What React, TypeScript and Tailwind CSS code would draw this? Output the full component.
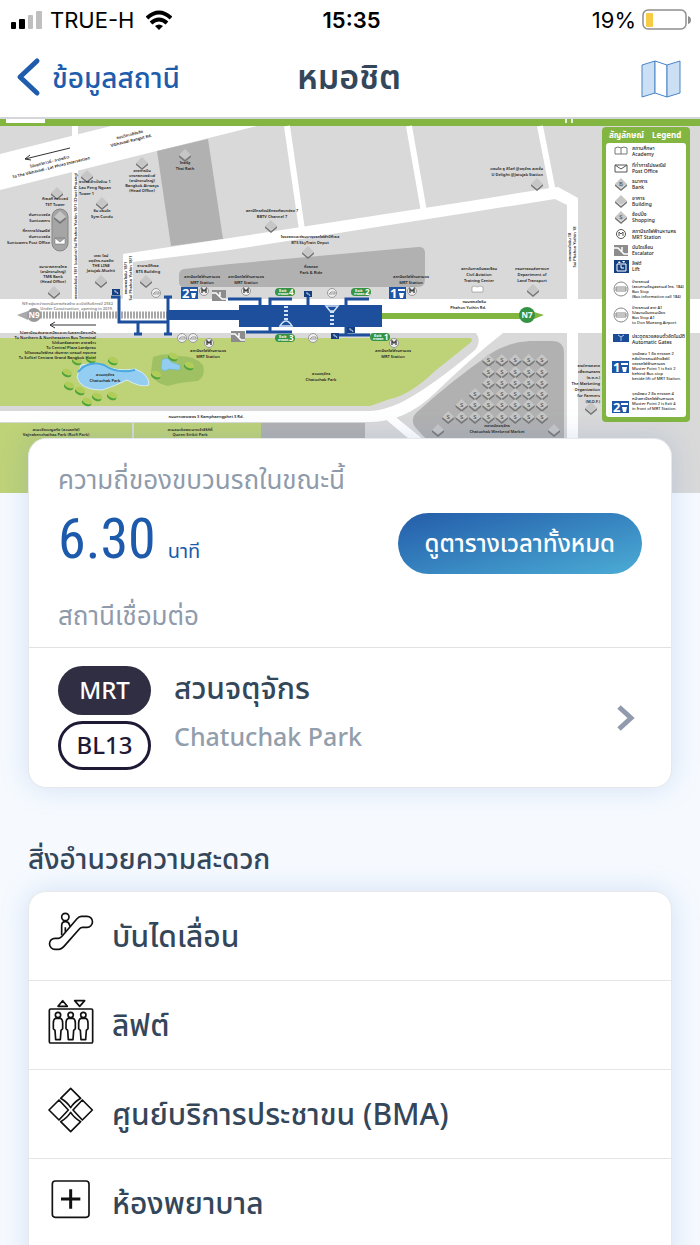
import { ReactNode } from 'react';

type Anchor = 'start' | 'middle' | 'end';

interface MapLabel {
  x: number;
  y: number;
  lines: string[];
  anchor?: Anchor;
  rotate?: number;
  gap?: number;
  tone?: string;
}

interface Facility {
  id: string;
  name: string;
  icon: ReactNode;
}

const mapLabels: MapLabel[] = [
  { x: 50, y: 163, lines: ['ไปแยกวิภาวดี - ลาดพร้าว', 'To The Vibhavadi - Lat Phrao Intersection'], rotate: -14 },
  { x: 130, y: 136, lines: ['ถนนวิภาวดีรังสิต', 'Vibhavadi Rangsit Rd.'], rotate: -14 },
  { x: 55, y: 200, lines: ['ทีเอสที ทาวเวอร์', 'TST Tower'] },
  { x: 50, y: 216, lines: ['ซันทาวเวอร์ส', 'Suntowers'], anchor: 'end' },
  { x: 50, y: 232, lines: ['ที่ทำการไปรษณีย์', 'ซันทาวเวอร์ส', 'Suntowers Post Office'], anchor: 'end' },
  { x: 79, y: 183, lines: ['อาคารเล้าเป้งง้วน 1', 'Lao Peng Nguan', 'Tower 1'], anchor: 'start' },
  { x: 102, y: 212, lines: ['ซิม คอนโด', 'Sym Condo'] },
  { x: 142, y: 172, lines: ['สายการบิน', 'บางกอกแอร์เวย์', '(สำนักงานใหญ่)', 'Bangkok Airways', '(Head Office)'], gap: 5 },
  { x: 185, y: 164, lines: ['ไทยรัฐ', 'Thai Rath'] },
  { x: 53, y: 268, lines: ['ธนาคารทหารไทย', '(สำนักงานใหญ่)', 'TMB Bank', '(Head Office)'], gap: 5 },
  { x: 101, y: 257, lines: ['เดอะ ไลน์', 'จตุจักร-หมอชิต', 'THE LINE', 'Jatujak-Mochit'], gap: 5 },
  { x: 148, y: 267, lines: ['อาคารบีทีเอส', 'BTS Building'] },
  { x: 202, y: 278, lines: ['สถานีรถไฟฟ้ามหานคร', 'MRT Station'] },
  { x: 246, y: 278, lines: ['สถานีรถไฟฟ้ามหานคร', 'MRT Station'] },
  { x: 272, y: 212, lines: ['สถานีโทรทัศน์สีกองทัพบกช่อง 7', 'BBTV Channel 7'] },
  { x: 310, y: 238, lines: ['โรงจอดและซ่อมบำรุงรถไฟฟ้าบีทีเอส', 'BTS SkyTrain Depot'] },
  { x: 311, y: 268, lines: ['ที่จอดรถ', 'Park & Ride'] },
  { x: 411, y: 278, lines: ['สถานีรถไฟฟ้ามหานคร', 'MRT Station'] },
  { x: 479, y: 270, lines: ['สถาบันการบินพลเรือน', 'Civil Aviation', 'Training Center'] },
  { x: 532, y: 270, lines: ['กรมการขนส่งทางบก', 'Department of', 'Land Transport'] },
  { x: 543, y: 170, lines: ['คอนโด ยู ดีไลท์ @จตุจักร สเตชั่น', 'U Delight @Jatujak Station'], anchor: 'end' },
  { x: 486, y: 303, lines: ['ถนนพหลโยธิน', 'Phahon Yothin Rd.'], anchor: 'end' },
  { x: 113, y: 305, lines: ['N9 อยู่ระหว่างดำเนินการก่อสร้าง จะเปิดให้บริการปี 2562', 'Under Construction, opening in 2019.'], anchor: 'end', tone: '#858585', gap: 5 },
  {
    x: 96,
    y: 334,
    lines: [
      'ไปสถานีขนส่งสายเหนือและตะวันออกเฉียงเหนือ',
      'To Northern & Northeastern Bus Terminal',
      'ไปเซ็นทรัลพลาซา ลาดพร้าว',
      'To Central Plaza Lardprao',
      'ไปโรงแรมโซฟิเทล เซ็นทารา แกรนด์ กรุงเทพ',
      'To Sofitel Centara Grand Bangkok Hotel',
    ],
    anchor: 'end',
    gap: 5,
  },
  { x: 105, y: 376, lines: ['สวนจตุจักร', 'Chatuchak Park'] },
  { x: 208, y: 352, lines: ['สถานีรถไฟฟ้ามหานคร', 'MRT Station'] },
  { x: 321, y: 375, lines: ['สวนจตุจักร', 'Chatuchak Park'] },
  { x: 393, y: 352, lines: ['สถานีรถไฟฟ้ามหานคร', 'MRT Station'] },
  { x: 206, y: 418, lines: ['ถนนกำแพงเพชร 3 Kamphaengphet 3 Rd.'] },
  { x: 56, y: 431, lines: ['สวนวชิรเบญจทัศ (สวนรถไฟ)', 'Vajirabenchathas Park (Rotfi Park)'], gap: 5 },
  { x: 190, y: 431, lines: ['สวนสมเด็จพระนางเจ้าสิริกิติ์', 'Queen Sirikit Park'], gap: 5 },
  { x: 497, y: 427, lines: ['ตลาดนัดจตุจักร', 'Chatuchak Weekend Market'] },
  {
    x: 600,
    y: 367,
    lines: ['องค์การตลาด', 'เพื่อเกษตรกร', '(อ.ต.ก.)', 'The Marketing', 'Organization', 'for Farmers', '(M.O.F.)'],
    anchor: 'end',
  },
  { x: 77, y: 236, lines: ['ซอยพหลโยธิน 18/1 (เฉยพ่วง) Soi Phahon Yothin 18/1 (Choei Phuang)'], rotate: -90 },
  { x: 127, y: 278, lines: ['ซอยพหลโยธิน 18/1', 'Soi Phahon Yothin 18/1'], rotate: -90, gap: 5 },
  { x: 571, y: 247, lines: ['ซอยพหลโยธิน 18', 'Soi Phahon Yothin 18'], rotate: -90, gap: 5 },
];

const buildings: [number, number][] = [
  [57, 193], [60, 217], [87, 176], [102, 203], [142, 163], [185, 155], [54, 292], [101, 281], [146, 281],
  [271, 226], [308, 252], [537, 184], [533, 290], [591, 408], [554, 430], [438, 430],
];

const trees: [number, number][] = [
  [113, 361], [77, 361], [91, 359], [67, 373], [69, 386], [80, 391],
  [97, 397], [112, 396], [87, 402], [156, 375], [189, 366], [173, 357],
];

// market stalls, listed per row as [y, first x]
const stallRows: [number, number][] = [
  [360, 488], [372, 488], [383, 488], [394, 475], [405, 461], [417, 448],
];

const legend = [
  { y: 150, icon: 'book', lines: ['สถานศึกษา', 'Academy'] },
  { y: 167, icon: 'mail', lines: ['ที่ทำการไปรษณีย์', 'Post Office'] },
  { y: 183, icon: 'B', lines: ['ธนาคาร', 'Bank'] },
  { y: 200, icon: 'building', lines: ['อาคาร', 'Building'] },
  { y: 216, icon: 'S', lines: ['ช้อปปิ้ง', 'Shopping'] },
  { y: 233, icon: 'mrt', lines: ['สถานีรถไฟฟ้ามหานคร', 'MRT Station'] },
  { y: 249, icon: 'escalator', lines: ['บันไดเลื่อน', 'Escalator'] },
  { y: 265, icon: 'lift', lines: ['ลิฟต์', 'Lift'] },
  { y: 283, icon: 'bus', lines: ['ป้ายรถเมล์', '(สอบถามข้อมูลรถเมล์ โทร. 184)', 'Bus Stop', '(Bus information call 184)'] },
  { y: 309, icon: 'bus', lines: ['ป้ายรถเมล์ สาย A1', 'ไปสนามบินดอนเมือง', 'Bus Stop A1', 'to Don Mueang Airport'] },
  { y: 338, icon: 'gate', lines: ['ประตูตรวจสอบตั๋วอัตโนมัติ', 'Automatic Gates'] },
  { y: 355, icon: '1', lines: ['จุดนัดพบ 1 คือ ทางออก 2', 'หลังป้ายรถเมล์ข้างลิฟต์', 'ของรถไฟฟ้ามหานคร', 'Muster Point 1 is Exit 2', 'behind Bus stop', 'beside lift of MRT Station.'] },
  { y: 395, icon: '2', lines: ['จุดนัดพบ 2 คือ ทางออก 4', 'หน้าสถานีรถไฟฟ้ามหานคร', 'Muster Point 2 is Exit 4', 'in front of MRT Station.'] },
];

function Tile({ x, y, mark }: { x: number; y: number; mark?: string }) {
  return (
    <g transform={`translate(${x} ${y})`}>
      <path d="M-6 1 0 6 6 1V3L0 8-6 3Z" fill="#777" />
      <path d="M0-5 6 1 0 5-6 1Z" fill="#c6c6c6" />
      {mark && (
        <text y="3" fontSize="6" textAnchor="middle" fill="#444">
          {mark}
        </text>
      )}
    </g>
  );
}

function RoundSign({ x, y, kind }: { x: number; y: number; kind: 'M' | 'bus' }) {
  return (
    <g transform={`translate(${x} ${y})`} fill="none">
      <circle r="4.5" fill="#eee" stroke="#999" />
      {kind === 'M' ? (
        <path d="M-2 2V-2L0 0 2-2V2" stroke="#444" strokeWidth="1.4" />
      ) : (
        <path d="M-3 1H3V-1H-1L-3 1Z" stroke="#999" />
      )}
    </g>
  );
}

function MusterPoint({ x, y, num }: { x: number; y: number; num: string }) {
  return (
    <g transform={`translate(${x} ${y})`} fill="#fff">
      <rect width="17" height="12" fill="#1d56a5" />
      <text x="1" y="11" fontSize="13" fontWeight="700">
        {num}
      </text>
      <path d="M9 2H16V4H9ZM10 6H15L14 11H11Z" />
    </g>
  );
}

function EscalatorSign({ x, y }: { x: number; y: number }) {
  return (
    <g transform={`translate(${x} ${y})`}>
      <rect width="14" height="11" fill="#8c8c8c" />
      <path d="M0 3H4L10 9H14M8 2V6" fill="none" stroke="#fff" strokeWidth="1.5" />
    </g>
  );
}

function LiftSign({ x, y }: { x: number; y: number }) {
  return (
    <g transform={`translate(${x} ${y})`}>
      <rect width="8" height="6" fill="#163f80" />
      <path d="M3 1V3H5L6 5" fill="none" stroke="#b9cbe6" />
    </g>
  );
}

function ExitSign({ x, y, num }: { x: number; y: number; num: string }) {
  return (
    <g transform={`translate(${x} ${y})`} fill="#fff" fontWeight="700">
      <rect width="20" height="8" rx="4" fill="#359344" />
      <text x="4" y="4" fontSize="4">Exit</text>
      <text x="3" y="7" fontSize="3">ทางออก</text>
      <text x="14" y="7" fontSize="8">{num}</text>
    </g>
  );
}

function LegendIcon({ icon, y }: { icon: string; y: number }) {
  switch (icon) {
    case 'book':
      return (
        <g fill="#fff" stroke="#777">
          <path d={`M615 ${y - 2}Q618 ${y - 4} 621 ${y - 2}Q624 ${y - 4} 627 ${y - 2}V${y + 4}H615Z`} />
          <path d={`M621 ${y - 2}V${y + 4}`} />
        </g>
      );
    case 'mail':
      return <path d={`M615 ${y - 2}H627V${y + 5}H615ZL621 ${y + 2} 627 ${y - 2}`} fill="#fff" stroke="#555" />;
    case 'mrt':
      return (
        <g fill="none" stroke="#555">
          <circle cx="621" cy={y + 1} r="4.5" />
          <path d={`M619 ${y + 3}V${y - 1}L621 ${y + 1} 623 ${y - 1}V${y + 3}`} />
        </g>
      );
    case 'escalator':
      return <EscalatorSign x={614} y={y - 4} />;
    case 'lift':
      return (
        <g>
          <rect x="614" y={y - 5} width="15" height="13" fill="#163f80" />
          <path d={`M617 ${y - 1}V${y + 6}H626V${y - 1}ZM621 ${y}V${y + 3}H624`} fill="none" stroke="#fff" />
          <path d={`M618 ${y - 2}L619 ${y - 4} 621 ${y - 2}ZM622 ${y - 4}H625L624 ${y - 2}Z`} fill="#fff" />
        </g>
      );
    case 'bus':
      return (
        <g fill="none" stroke="#888">
          <circle cx="621" cy={y + 6} r="7" />
          <path d={`M616 ${y + 8}V${y + 4}H626V${y + 8}ZM616 ${y + 6}H626`} />
        </g>
      );
    case 'gate':
      return (
        <g>
          <rect x="613" y={y - 4} width="16" height="8" fill="#1b4c97" />
          <path d={`M618 ${y - 3}L621 ${y - 1} 624 ${y - 3}M621 ${y - 1}V${y + 3}`} fill="none" stroke="#aecbea" />
        </g>
      );
    case '1':
    case '2':
      return <MusterPoint x={612} y={y + 6} num={icon} />;
    default:
      return <Tile x={621} y={y} mark={icon === 'building' ? undefined : icon} />;
  }
}

function StationMap() {
  return (
    <svg
      viewBox="0 119 700 374"
      className="block w-full bg-[#d9d9d9]"
      role="img"
      aria-label="แผนที่สถานีหมอชิต"
      fontFamily="'Noto Sans', 'Noto Sans Thai', sans-serif"
    >
      <rect y="119" width="700" height="7" fill="#83b541" />
      <rect x="6" y="119" width="39" height="4" fill="#fff" />
      <path d="M565 119v4h2v-4zM571 119v4h2v-4z" fill="#e6f0d8" />

      {/* roads and blocks north of the line */}
      <path d="M0 154 111 126H257L0 190Z" fill="#fff" />
      <path d="M157 151 208 139 223 239 171 246Z" fill="#b1b1b1" />
      <path d="M75 126V300" stroke="#fff" strokeWidth="6" />
      <path d="M287 126 302 230M409 126 424 212M540 126 553 192" stroke="#fff" strokeWidth="6" />
      <path d="M123 254 230 238 470 201 550 188 558 187 578 198V300H567V205L555 199 460 214 230 250 133 262V300H123Z" fill="#fff" />
      <path d="M179 275Q179 270 184 269L230 264 418 247Q425 246 425 253V279Q425 287 418 287H184Q179 287 179 282Z" fill="#b1b1b1" />
      <rect x="52" y="209" width="16" height="42" rx="8" fill="#a5a5a5" stroke="#858585" />
      <path d="M55 238H65V244H55ZL60 242 65 238" fill="#fff" stroke="#666" strokeWidth=".5" />

      {/* parks, market and roads south of the line */}
      <rect y="299" width="700" height="34" fill="#fff" />
      <path d="M0 338H470Q474 339 470 343L435 371Q410 395 390 399L370 406H0Z" fill="#bed278" />
      <path d="M0 411H370Q385 410 400 403 430 388 475 350 482 341 476 333H503Q470 359 435 393 405 422 370 422H0Z" fill="#fff" />
      <path d="M383 417 392 414 424 440 430 493H412L409 439Z" fill="#fff" />
      <path d="M0 423H132V493H0ZM134 423H261V493H134Z" fill="#bed278" />
      <rect x="261" y="423" width="104" height="70" fill="#b1b1b1" />
      <path d="M564 493V353Q564 341 552 341H530Q508 342 490 354 450 382 416 413 410 419 415 427L428 441V493Z" fill="#b1b1b1" />
      <rect x="567" y="333" width="11" height="160" fill="#fff" />

      <path d="M153 357Q166 352 178 356 196 356 203 365 206 376 198 381 180 382 168 386 152 382 151 372Z" fill="#9fc163" />
      {trees.map(([x, y]) => (
        <g key={`${x}-${y}`} transform={`translate(${x} ${y}) rotate(22)`}>
          <ellipse cy="1" rx="5" ry="3" fill="#4fa33c" />
          <ellipse cy="-1" rx="5" ry="3" fill="#b0cd5a" />
        </g>
      ))}
      <path d="M81 365Q92 362 104 365 116 372 135 369 149 374 149 385 141 388 127 380 115 386 102 390 80 390 77 377Z" fill="#93cdf1" stroke="#d9ecf5" />
      <path d="M78 372Q88 360 104 365 117 374 135 370" fill="none" stroke="#4aa9dd" strokeWidth="2" />
      <path d="M162 360Q168 356 171 362L180 365V370L169 369Q163 373 161 368Z" fill="#93cdf1" stroke="#5fb4e3" strokeWidth=".5" />

      {/* skytrain line */}
      <path d="M40 315H168" stroke="#a8a8a8" strokeWidth="7" strokeDasharray="2 1" />
      <path d="M17 315 28 311V320Z" fill="#aaa" />
      <circle cx="34" cy="315" r="7" fill="#999" />
      <text x="34" y="318" fontSize="8" fontWeight="700" textAnchor="middle" fill="#fff">N9</text>
      <path d="M96 325H50M55 322 50 325 55 328M70 148 25 159M30 155 25 159 31 160" fill="none" stroke="#333" />
      <path d="M382 313H534V312L544 315 534 319H382Z" fill="#83b541" />
      <circle cx="527" cy="315" r="8" fill="#359344" />
      <text x="527" y="318" fontSize="8" fontWeight="700" textAnchor="middle" fill="#fff">N7</text>
      <path d="M167 310H239V305H382V327H239V320H167Z" fill="#1d4f9c" />
      <path
        d="M111 297H119V322H167M138 322V334M134 334H142M168 297V334M164 297H172M164 334H172M228 299H260V307M270 307V299H292M308 296V306M346 306V299H369M270 326V332M246 332H292M346 326V335M335 335H370"
        fill="none"
        stroke="#1d4f9c"
        strokeWidth="3"
      />
      <path d="M286 306V322M332 311V326" stroke="#cfe1f5" strokeWidth="4" strokeDasharray="2 2" />
      <path d="M280 326Q286 316 292 326ZM326 306H338L334 311H330Z" fill="none" stroke="#cfe1f5" strokeWidth="1.5" />

      <MusterPoint x={181} y={287} num="2" />
      <MusterPoint x={389} y={287} num="1" />
      <EscalatorSign x={212} y={290} />
      <EscalatorSign x={231} y={331} />
      <LiftSign x={304} y={291} />
      <LiftSign x={112} y={289} />
      <LiftSign x={331} y={333} />
      <LiftSign x={347} y={327} />
      <ExitSign x={275} y={288} num="4" />
      <ExitSign x={351} y={288} num="2" />
      <ExitSign x={275} y={334} num="3" />
      <ExitSign x={370} y={333} num="1" />
      <RoundSign x={204} y={291} kind="M" />
      <RoundSign x={246} y={291} kind="M" />
      <RoundSign x={412} y={291} kind="M" />
      <RoundSign x={394} y={343} kind="M" />
      <RoundSign x={209} y={343} kind="M" />
      <RoundSign x={156} y={293} kind="bus" />
      <RoundSign x={332} y={293} kind="bus" />
      <RoundSign x={182} y={338} kind="bus" />
      <RoundSign x={193} y={338} kind="bus" />
      <RoundSign x={313} y={338} kind="bus" />
      <path d="M472 287Q475 285 477 287 480 285 483 287V292H472Z" fill="#fff" stroke="#777" strokeWidth=".5" />

      {buildings.map(([x, y]) => (
        <Tile key={`${x}-${y}`} x={x} y={y - 1} />
      ))}
      {stallRows.map(([y, first]) =>
        Array.from({ length: Math.round((542 - first) / 13.4) + 1 }, (_, i) => (
          <Tile key={`${y}-${i}`} x={542 - i * 13.4} y={y - 1} mark="S" />
        ))
      )}

      {mapLabels.map(({ x, y, lines, anchor = 'middle', rotate = 0, gap = 6, tone = '#222' }) => (
        <text
          key={`${x}-${y}`}
          fontSize="4"
          fontWeight="600"
          textAnchor={anchor}
          fill={tone}
          transform={`rotate(${rotate} ${x} ${y})`}
        >
          {lines.map((line, i) => (
            <tspan key={line} x={x} y={y + i * gap}>
              {line}
            </tspan>
          ))}
        </text>
      ))}

      <rect x="602" y="127" width="88" height="295" rx="4" fill="#83b541" />
      <rect x="606" y="143" width="80" height="274" rx="3" fill="#fff" />
      <g fill="#fff" fontWeight="700" fontSize="8">
        <text x="609" y="138">สัญลักษณ์</text>
        <text x="652" y="138">Legend</text>
      </g>
      {legend.map(({ y, icon, lines }) => (
        <g key={y}>
          <LegendIcon icon={icon} y={y} />
          <text fontSize={lines.length > 2 ? 4 : 5} fontWeight="500" fill="#222">
            {lines.map((line, i) => (
              <tspan key={line} x="632" y={y + i * (lines.length > 2 ? 5 : 6)}>
                {line}
              </tspan>
            ))}
          </text>
        </g>
      ))}
    </svg>
  );
}

function FacilityIcon({ children }: { children: ReactNode }) {
  return (
    <svg
      viewBox="0 0 138 138"
      className="mb-2 size-[46px] shrink-0"
      fill="none"
      stroke="#111"
      strokeWidth="5"
      strokeLinejoin="round"
      aria-hidden="true"
    >
      {children}
    </svg>
  );
}

const facilities: Facility[] = [
  {
    id: 'escalator',
    name: 'บันไดเลื่อน',
    icon: (
      <FacilityIcon>
        <circle cx="52" cy="24" r="11" />
        <path d="M41 79V50Q41 38 52 38 61 38 64 46L67 54M52 68V55" />
        <path d="M100 22H117A16 16 0 0 1 117 55H104Q98 55 94 60L50 110Q40 121 32 121H21A16 16 0 0 1 21 88H31Q37 88 42 82L87 29Q93 22 100 22Z" />
      </FacilityIcon>
    ),
  },
  {
    id: 'lift',
    name: 'ลิฟต์',
    icon: (
      <FacilityIcon>
        <path d="M44 8 58 25H30ZM80 8H110L95 25Z" />
        <rect x="4" y="33" width="130" height="102" rx="4" />
        {[30, 68, 106].map((x) => (
          <g key={x} transform={`translate(${x} 0)`}>
            <circle cy="51" r="8" />
            <path d="M-7 61Q-14 64-14 75V92L-9 97-7 125H7L9 97 14 92V75Q14 64 7 61Z" />
          </g>
        ))}
      </FacilityIcon>
    ),
  },
  {
    id: 'bma',
    name: 'ศูนย์บริการประชาขน (BMA)',
    icon: (
      <FacilityIcon>
        <path d="M68 4 98 34Q78 46 68 62 58 46 38 34Z" />
        <path d="M68 134 98 104Q78 92 68 76 58 92 38 104Z" />
        <path d="M3 69 33 39 61 69 33 99ZM133 69 103 39 75 69 103 99Z" />
      </FacilityIcon>
    ),
  },
  {
    id: 'first-aid',
    name: 'ห้องพยาบาล',
    icon: (
      <FacilityIcon>
        <rect x="13" y="15" width="110" height="109" rx="9" />
        <path d="M68 40V98M39 69H97" strokeWidth="9" />
      </FacilityIcon>
    ),
  },
];

function StatusBar() {
  return (
    <div className="grid h-10 grid-cols-3 items-center pr-2 pl-[11px] font-[Inter] text-[22px] text-black">
      <div className="flex items-center gap-2">
        <svg viewBox="0 0 31 20" className="h-5 w-[31px]" aria-hidden="true">
          <rect y="12" width="5" height="7" rx="1" />
          <rect x="8" y="9" width="6" height="10" rx="1" />
          <rect x="17" y="5" width="5" height="14" rx="1" fill="#bfbfbf" />
          <rect x="25" y="1" width="6" height="18" rx="1" fill="#bfbfbf" />
        </svg>
        <span className="whitespace-nowrap">TRUE-H</span>
        <svg viewBox="0 0 26 20" className="ml-1 h-5 w-[26px]" fill="none" stroke="#000" strokeWidth="4" aria-hidden="true">
          <path d="M1 8Q13-3 25 8M5 13Q13 6 21 13" />
          <path d="M9 16Q13 13 17 16L13 20Z" fill="#000" stroke="none" />
        </svg>
      </div>
      <div className="text-center font-semibold">15:35</div>
      <div className="flex items-center justify-end gap-1.5">
        <span>19%</span>
        <svg viewBox="0 0 50 22" className="h-[22px] w-[50px]" aria-hidden="true">
          <rect x="1" y="1" width="43" height="19" rx="5" fill="#fff" stroke="#8e8e8e" strokeWidth="1.5" />
          <rect x="4" y="4" width="7" height="14" rx="1" fill="#f7cb45" />
          <path d="M46 7Q49 8 49 11T46 15Z" fill="#8e8e8e" />
        </svg>
      </div>
    </div>
  );
}

function NavBar() {
  return (
    <nav className="grid h-[79px] grid-cols-[1fr_auto_1fr] items-center border-b-2 border-[#d5d6da] pr-[18px] pb-1 pl-4">
      <button type="button" className="flex items-center gap-[11px] text-[28px] font-medium text-[#205cac]">
        <svg viewBox="0 0 25 40" className="h-10 w-[25px]" fill="none" stroke="#205cac" strokeWidth="5" strokeLinecap="round" strokeLinejoin="round" aria-hidden="true">
          <path d="M21 4 4 20 21 36" />
        </svg>
        ข้อมูลสถานี
      </button>
      <h1 className="text-[34px] font-semibold text-[#34475a]">หมอชิต</h1>
      <button type="button" aria-label="แผนที่" className="mt-1 justify-self-end">
        <svg viewBox="0 0 42 40" className="h-10 w-[42px]" stroke="#4a85c5" strokeLinejoin="round">
          <path d="M2 6 15 2V34L2 38Z" fill="#cbdff5" />
          <path d="M15 2 27 6V38L15 34Z" fill="#fff" />
          <path d="M27 6 40 2V34L27 38Z" fill="#cbdff5" />
        </svg>
      </button>
    </nav>
  );
}

export default function App() {
  return (
    <div className="relative h-screen overflow-hidden bg-[#f6faff] font-['Noto_Sans','Noto_Sans_Thai',sans-serif] text-[#34475a]">
      <header className="bg-white">
        <StatusBar />
        <NavBar />
      </header>
      <StationMap />

      <main className="relative -mt-[55px] px-7">
        <section className="rounded-[18px] border border-[#e6e8eb] bg-white shadow-[0_0_28px_rgba(80,130,200,0.22)]">
          <div className="h-[208px] px-[29px] pt-[22px]">
            <h2 className="text-[26px] leading-9 text-[#8f9bab]">ความถี่ของขบวนรถในขณะนี้</h2>
            <div className="flex h-[92px] items-center justify-between">
              <p className="flex items-baseline gap-3 pb-2 text-[#1d5aab]">
                <span className="font-['Roboto_Condensed',Roboto,sans-serif] text-[56px] leading-none">6.30</span>
                <span className="text-xl">นาที</span>
              </p>
              <button
                type="button"
                className="h-[61px] rounded-full bg-linear-165 from-[#255ca9] to-[#4cacd5] px-[27px] text-2xl font-medium text-white"
              >
                ดูตารางเวลาทั้งหมด
              </button>
            </div>
            <h2 className="mt-2 text-[26px] leading-9 text-[#8f9bab]">สถานีเชื่อมต่อ</h2>
          </div>
          <a href="#chatuchak-park" className="flex h-[140px] items-center border-t border-[#dfe1e3] pr-9 pl-[29px]">
            <div className="flex flex-col gap-1.5 text-center text-2xl font-medium">
              <span className="flex h-[49px] w-[93px] items-center justify-center rounded-full bg-[#302e42] text-white">MRT</span>
              <span className="flex h-[49px] w-[93px] items-center justify-center rounded-full border-[3px] border-[#1e1a36] text-[#1e1a36]">
                BL13
              </span>
            </div>
            <div className="mb-3 ml-[23px] flex flex-1 flex-col gap-3">
              <span className="text-[30px] leading-9 font-medium">สวนจตุจักร</span>
              <span className="text-[25px] leading-9 font-medium text-[#929eac]">Chatuchak Park</span>
            </div>
            <svg viewBox="0 0 18 26" className="h-[26px] w-[18px]" fill="none" stroke="#929bad" strokeWidth="5" aria-hidden="true">
              <path d="M2 2 14 13 2 24" />
            </svg>
          </a>
        </section>

        <h2 className="mt-[52px] text-[28px] leading-9 font-medium">สิ่งอำนวยความสะดวก</h2>
        <ul className="mt-[15px] rounded-[18px] border border-[#e6e8eb] bg-white pb-10 shadow-[0_0_28px_rgba(80,130,200,0.22)]">
          {facilities.map((facility) => (
            <li key={facility.id} className="flex h-[89px] items-center gap-[18px] border-b border-[#e4e5e7] pl-[19px]">
              {facility.icon}
              <span className="text-[30px] leading-10 font-medium">{facility.name}</span>
            </li>
          ))}
        </ul>
      </main>
    </div>
  );
}
